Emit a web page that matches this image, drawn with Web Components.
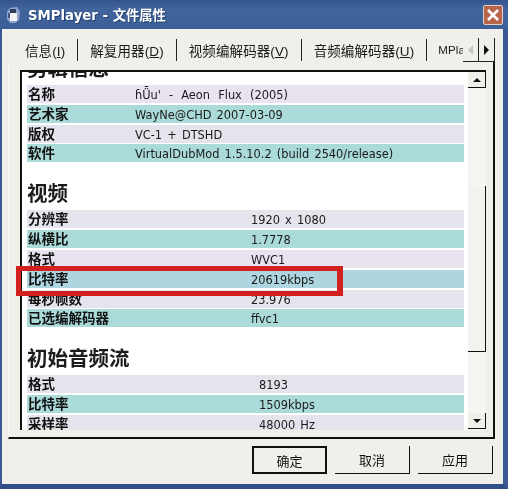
<!DOCTYPE html>
<html lang="zh">
<head>
<meta charset="utf-8">
<title>SMPlayer</title>
<style>
  html, body { margin: 0; background: #3b5a94; }
  body { font-family: "DejaVu Sans", "Noto Sans CJK SC", sans-serif; }
</style>
</head>
<body>
<smp-dialog>
  <title-bar slot="title">SMPlayer - 文件属性</title-bar>
  <tab-strip slot="tabs" labels="信息(I)|解复用器(D)|视频编解码器(V)|音频编解码器(U)|MPlay"></tab-strip>
  <info-panel slot="page">
    <info-section heading="剪辑信息" label-width="107" style="margin-top:-35px">
      <info-row label="名称" tone="lilac"><span style="word-spacing:4.5px">ɦǕu' - Aeon Flux (2005)</span></info-row>
      <info-row label="艺术家" tone="teal">WayNe@CHD 2007-03-09</info-row>
      <info-row label="版权" tone="grey">VC-1 + DTSHD</info-row>
      <info-row label="软件" tone="teal">VirtualDubMod 1.5.10.2 (build 2540/release)</info-row>
    </info-section>
    <info-section heading="视频" label-width="223">
      <info-row label="分辨率" tone="grey">1920 x 1080</info-row>
      <info-row label="纵横比" tone="teal">1.7778</info-row>
      <info-row label="格式" tone="lilac">WVC1</info-row>
      <info-row label="比特率" tone="blue">20619kbps</info-row>
      <info-row label="每秒帧数" tone="grey">23.976</info-row>
      <info-row label="已选编解码器" tone="teal">ffvc1</info-row>
    </info-section>
    <info-section heading="初始音频流" label-width="231">
      <info-row label="格式" tone="grey">8193</info-row>
      <info-row label="比特率" tone="teal">1509kbps</info-row>
      <info-row label="采样率" tone="grey">48000 Hz</info-row>
    </info-section>
  </info-panel>
  <dialog-button slot="buttons" default>确定</dialog-button>
  <dialog-button slot="buttons">取消</dialog-button>
  <dialog-button slot="buttons">应用</dialog-button>
</smp-dialog>

<script>
class SmpDialog extends HTMLElement {
  constructor() {
    super();
    this.attachShadow({ mode: "open" });
    this.shadowRoot.innerHTML = `
      <style>
        :host { display: flex; flex-direction: column; position: relative; width: 508px; height: 489px; overflow: hidden; background: #f1efe9; filter: blur(.35px); }
        .body { flex: 1; display: flex; flex-direction: column; border-left: 2px solid #3b5a94; border-right: 5px solid #3b5a94; border-bottom: 5px solid #2f4f86; min-height: 0; }
        .page { height: 377px; margin: 0 0 0 6px; box-sizing: border-box; padding: 8px 7px 8px 11px; border-right: 2px solid #111; border-bottom: 2px solid #111; border-left: 1px solid #fbfaf6; width: 487px; }
        .buttons { flex: 1; display: flex; justify-content: flex-end; gap: 8px; padding: 7px 10px 0 0; }
        .mark { position: absolute; left: 16px; top: 266px; width: 327px; height: 30px; box-sizing: border-box; border: 5px solid #d2201f; border-right-width: 6px; }
      </style>
      <slot name="title"></slot>
      <div class="body">
        <slot name="tabs"></slot>
        <div class="page"><slot name="page"></slot></div>
        <div class="buttons"><slot name="buttons"></slot></div>
      </div>
      <div class="mark"></div>`;
  }
}

class TitleBar extends HTMLElement {
  constructor() {
    super();
    this.attachShadow({ mode: "open" });
    this.shadowRoot.innerHTML = `
      <style>
        :host { display: flex; align-items: center; height: 29px; flex: none; padding: 0 5px 0 5px; background: linear-gradient(#34548e, #41649c 30%, #3d5f97); color: #fff; font: bold 13.3px "DejaVu Sans", "Noto Sans CJK SC", sans-serif; }
        .icon { width: 16px; height: 17px; margin-right: 7px; }
        .text { flex: 1; white-space: nowrap; text-shadow: 1px 1px 0 #24406f; }
        .close { width: 20px; height: 20px; box-sizing: border-box; border: 1px solid #e4cfc6; border-radius: 2px; background: #b9654c; }
        .close svg { display: block; }
      </style>
      <svg class="icon" viewBox="0 0 16 17">
        <path d="M2 6l3-4 7-1 3 5-1 8-4 3H5l-3-4z" fill="#8ea4cc"/>
        <path d="M5 3h6v4H5z" fill="#2f3a5c"/>
        <path d="M5 7h7v8H5z" fill="#f0f2f6"/>
        <path d="M3 7h2v5H3z" fill="#465680"/>
      </svg>
      <span class="text"><slot></slot></span>
      <div class="close"><svg width="18" height="18" viewBox="0 0 18 18"><path d="M4 4l10 10M14 4L4 14" stroke="#fff" stroke-width="2.6"/></svg></div>`;
  }
}

class TabStrip extends HTMLElement {
  constructor() {
    super();
    this.attachShadow({ mode: "open" });
    const labels = this.getAttribute("labels").split("|");
    const tabs = labels.map(label => {
      const m = label.match(/^(.*)\((.)\)$/);
      if (!m) return `<span class="tab latin">${label}</span>`;
      return `<span class="tab">${m[1]}(<u>${m[2]}</u>)</span>`;
    }).join('<i class="sep"></i>');
    this.shadowRoot.innerHTML = `
      <style>
        :host { display: block; position: relative; height: 33px; flex: none; overflow: hidden; color: #1a1a1a; font: 13.5px "Liberation Sans", "Noto Sans CJK SC", sans-serif; letter-spacing: .1px; }
        .row { display: flex; align-items: center; height: 33px; padding: 8px 0 0 23px; white-space: nowrap; box-sizing: border-box; }
        .sep { flex: none; width: 1px; height: 22px; margin: 0 12px; background: #222; }
        .tab { flex: none; }
        .latin { font-size: 11.5px; margin-left: -1px; }
        .scroll { position: absolute; top: 9px; right: 8px; display: flex; height: 24px; box-sizing: border-box; background: #f1efe9; border-right: 1.5px solid #222; }
        .scroll div { width: 15px; display: flex; align-items: center; justify-content: center; box-sizing: border-box; border-bottom: 1.5px solid #222; }
        .scroll div + div { border-left: 1.5px solid #222; width: 16px; }
        .l { width: 0; height: 0; border: 5px solid transparent; border-left: 0; border-right: 5px solid #c8c6c0; }
        .r { width: 0; height: 0; border: 5px solid transparent; border-right: 0; border-left: 5px solid #111; }
      </style>
      <div class="row">${tabs}</div>
      <div class="scroll"><div><span class="l"></span></div><div><span class="r"></span></div></div>`;
  }
}

class InfoPanel extends HTMLElement {
  constructor() {
    super();
    this.attachShadow({ mode: "open" });
    this.shadowRoot.innerHTML = `
      <style>
        :host { display: flex; height: 360px; box-sizing: border-box; border-left: 2px solid #111; border-top: 2px solid #111; background: #fff; }
        .view { flex: 1; overflow: hidden; padding: 0 4px 0 5px; background: #fff; }
        .bar { flex: none; width: 18px; display: flex; flex-direction: column; background: #f6f5f1; }
        .btn { flex: none; height: 16px; display: flex; align-items: center; justify-content: center; border-right: 1.5px solid #111; border-bottom: 1.5px solid #111; background: #f1efe9; box-sizing: border-box; }
        .up { width: 0; height: 0; border: 4px solid transparent; border-top: 0; border-bottom: 4px solid #111; }
        .down { width: 0; height: 0; border: 4px solid transparent; border-bottom: 0; border-top: 4px solid #111; }
        .gap { flex: none; height: 98px; }
        .gap2 { flex: 1; }
        .thumb { flex: none; height: 166px; box-sizing: border-box; border-right: 1.5px solid #111; border-bottom: 1.5px solid #111; background: #f3f2ee; }
        .end { flex: none; height: 1px; }
      </style>
      <div class="view"><slot></slot></div>
      <div class="bar">
        <div class="btn"><span class="up"></span></div>
        <div class="gap"></div>
        <div class="thumb"></div>
        <div class="gap2"></div>
        <div class="btn"><span class="down"></span></div>
        <div class="end"></div>
      </div>`;
  }
}

class InfoSection extends HTMLElement {
  constructor() {
    super();
    this.attachShadow({ mode: "open" });
    this.shadowRoot.innerHTML = `
      <style>
        :host { display: block; --label-width: ${this.getAttribute("label-width")}px; }
        h2 { margin: 0; height: 48px; padding-top: 18px; box-sizing: border-box; font: bold 20.5px/28px "Liberation Sans", "Noto Sans CJK SC", sans-serif; color: #1c1c1c; }
        .rows { display: flex; flex-direction: column; gap: 1.8px; }
      </style>
      <h2>${this.getAttribute("heading")}</h2>
      <div class="rows"><slot></slot></div>`;
  }
}

const ROW_TONES = { lilac: "#e8e3ef", teal: "#aadbd9", grey: "#e4e4ec", blue: "#aed6e0" };

class InfoRow extends HTMLElement {
  constructor() {
    super();
    this.attachShadow({ mode: "open" });
    this.shadowRoot.innerHTML = `
      <style>
        :host { display: grid; grid-template-columns: var(--label-width) 1fr; align-items: start; height: 18px; background: ${ROW_TONES[this.getAttribute("tone")]}; color: #1a1a1a; white-space: nowrap; }
        .label { font: bold 13.5px/20px "Liberation Sans", "Noto Sans CJK SC", sans-serif; padding-left: 1px; color: #111; }
        .value { font: 11.4px/20px "DejaVu Sans", "Noto Sans CJK SC", sans-serif; word-spacing: 1.5px; padding-left: 1px; }
      </style>
      <span class="label">${this.getAttribute("label")}</span>
      <span class="value"><slot></slot></span>`;
  }
}

class DialogButton extends HTMLElement {
  constructor() {
    super();
    this.attachShadow({ mode: "open" });
    this.shadowRoot.innerHTML = `
      <style>
        :host { display: flex; align-items: center; justify-content: center; width: 75px; height: 28px; box-sizing: border-box; border-right: 1.5px solid #111; border-bottom: 1.5px solid #111; color: #111; font: 13px "Liberation Sans", "Noto Sans CJK SC", sans-serif; }
        :host([default]) { border: 2px solid #111; }
      </style>
      <slot></slot>`;
  }
}

customElements.define("smp-dialog", SmpDialog);
customElements.define("title-bar", TitleBar);
customElements.define("tab-strip", TabStrip);
customElements.define("info-panel", InfoPanel);
customElements.define("info-section", InfoSection);
customElements.define("info-row", InfoRow);
customElements.define("dialog-button", DialogButton);
</script>
</body>
</html>
